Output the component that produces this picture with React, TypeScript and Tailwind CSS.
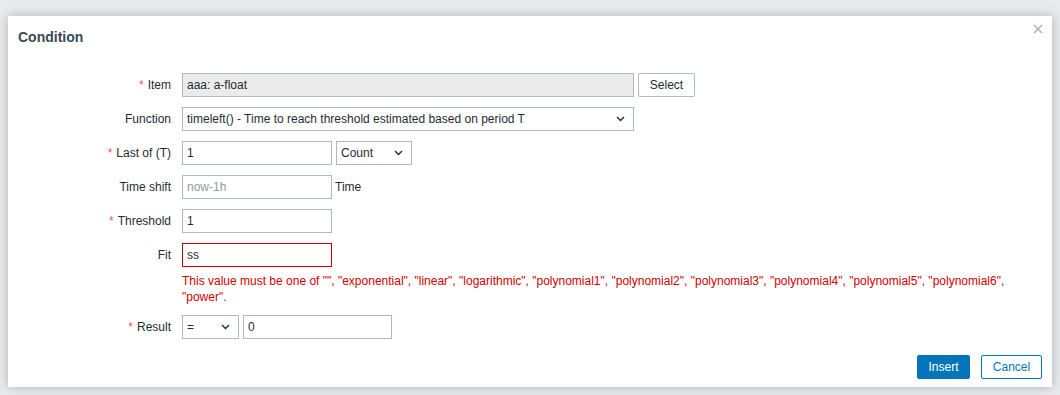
const Chevron = () => (
  <svg width="9" height="6" viewBox="0 0 9 6" className="shrink-0">
    <path d="M1 1l3.5 3.5L8 1" fill="none" stroke="#1f2c33" strokeWidth="1.4" />
  </svg>
);

const Label = ({ text, required }: { text: string; required?: boolean }) => (
  <div className="w-[163px] shrink-0 text-right leading-[24px] text-[#1f2c33]">
    {required && <span className="text-[#e45959] mr-[4px]">*</span>}
    {text}
  </div>
);

const inputCls = "h-[24px] border px-[4px] leading-[22px] text-[#1f2c33]";

const Select = ({ value, width }: { value: string; width: string }) => (
  <div className={`${inputCls} ${width} border-[#acbbc2] bg-white flex items-center justify-between pr-[8px]`}>
    <span>{value}</span>
    <Chevron />
  </div>
);

export default function App() {
  return (
    <div
      className="w-[1060px] h-[395px] bg-[#e8ebed] pt-[16px] pl-[8px] overflow-hidden"
      style={{ fontFamily: '"Liberation Sans", Arial, sans-serif' }}
    >
      <div className="w-[1044px] h-[371px] bg-white shadow-[0_0_10px_rgba(0,0,0,0.25)] text-[12px] flex flex-col">
        <div className="flex justify-between items-start pl-[10px] pr-[9px] pt-[12px]">
          <h4 className="text-[14px] font-bold leading-[18px] text-[#384955]">Condition</h4>
          <svg width="10" height="10" viewBox="0 0 10 10" className="mt-[-4px]">
            <path d="M1 1l8 8M9 1l-8 8" stroke="#a9b3ba" strokeWidth="1.5" />
          </svg>
        </div>

        <div className="flex flex-col gap-[10px] pt-[27px]">
          <div className="flex">
            <Label text="Item" required />
            <div className="ml-[11px] flex gap-[4px]">
              <div className={`${inputCls} w-[452px] border-[#acbbc2] bg-[#ebebeb]`}>aaa: a-float</div>
              <button className="h-[24px] w-[57px] border border-[#acbbc2] bg-white rounded-[2px] text-[#1f2c33]">
                Select
              </button>
            </div>
          </div>

          <div className="flex">
            <Label text="Function" />
            <div className="ml-[11px]">
              <Select value="timeleft() - Time to reach threshold estimated based on period T" width="w-[452px]" />
            </div>
          </div>

          <div className="flex">
            <Label text="Last of (T)" required />
            <div className="ml-[11px] flex gap-[4px]">
              <div className={`${inputCls} w-[150px] border-[#acbbc2] bg-white`}>1</div>
              <Select value="Count" width="w-[76px]" />
            </div>
          </div>

          <div className="flex">
            <Label text="Time shift" />
            <div className="ml-[11px] flex gap-[3px] items-center">
              <div className="h-[24px] w-[150px] border border-[#acbbc2] bg-white px-[4px] leading-[22px] text-[#8f9aa0]">
                now-1h
              </div>
              <span className="text-[#1f2c33]">Time</span>
            </div>
          </div>

          <div className="flex">
            <Label text="Threshold" required />
            <div className="ml-[11px]">
              <div className={`${inputCls} w-[150px] border-[#acbbc2] bg-white`}>1</div>
            </div>
          </div>

          <div className="flex">
            <Label text="Fit" />
            <div className="ml-[11px] flex-1 pr-[30px]">
              <div className={`${inputCls} w-[150px] border-[#cc0000] bg-white`}>ss</div>
              <p className="mt-[6px] leading-[16px] text-[#d20000]">
                This value must be one of "", "exponential", "linear", "logarithmic", "polynomial1", "polynomial2",
                "polynomial3", "polynomial4", "polynomial5", "polynomial6", "power".
              </p>
            </div>
          </div>

          <div className="flex">
            <Label text="Result" required />
            <div className="ml-[11px] flex gap-[4px]">
              <Select value="=" width="w-[57px]" />
              <div className={`${inputCls} w-[149px] border-[#acbbc2] bg-white`}>0</div>
            </div>
          </div>
        </div>

        <div className="flex justify-end gap-[11px] pr-[10px] mt-[16px]">
          <button className="h-[24px] w-[53px] bg-[#0275b8] border border-[#0275b8] text-white rounded-[2px]">
            Insert
          </button>
          <button className="h-[24px] w-[61px] bg-white border border-[#0275b8] text-[#0275b8] rounded-[2px]">
            Cancel
          </button>
        </div>
      </div>
    </div>
  );
}
